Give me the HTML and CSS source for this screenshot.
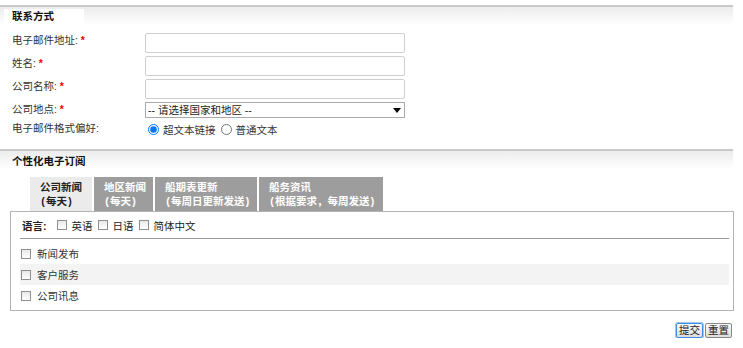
FILE: index.html
```html
<!DOCTYPE html>
<html lang="zh-cn">
<head>
    <meta charset="UTF-8">
    <title>联系方式</title>
    <link rel="stylesheet" href="styles.css">
</head>
<body>
    <!-- 联系方式 -->
    <div class="panel-head">
        <span class="panel-title boxed">联系方式</span>
    </div>
    <form class="contact-form">
        <label class="field-label">电子邮件地址: <em>*</em></label>
        <input type="text" class="text-input">

        <label class="field-label">姓名: <em>*</em></label>
        <input type="text" class="text-input">

        <label class="field-label">公司名称: <em>*</em></label>
        <input type="text" class="text-input">

        <label class="field-label">公司地点: <em>*</em></label>
        <div class="select-wrap">
            <select class="select-input">
                <option>-- 请选择国家和地区 --</option>
            </select>
        </div>

        <label class="field-label">电子邮件格式偏好:</label>
        <div class="radio-group">
            <label><input type="radio" name="fmt" checked> 超文本链接</label>
            <label><input type="radio" name="fmt"> 普通文本</label>
        </div>
    </form>

    <!-- 个性化电子订阅 -->
    <div class="panel-head second">
        <span class="panel-title">个性化电子订阅</span>
    </div>
    <div class="tabs">
        <div class="tab active">公司新闻<br><span class="pn">(</span>每天<span class="pn">)</span></div>
        <div class="tab">地区新闻<br><span class="pn">(</span>每天<span class="pn">)</span></div>
        <div class="tab">船期表更新<br><span class="pn">(</span>每周日更新发送<span class="pn">)</span></div>
        <div class="tab">船务资讯<br><span class="pn">(</span>根据要求，每周发送<span class="pn">)</span></div>
    </div>
    <div class="tab-body">
        <div class="lang-row">
            <b>语言:</b>
            <label><input type="checkbox" class="check"> 英语</label>
            <label><input type="checkbox" class="check"> 日语</label>
            <label><input type="checkbox" class="check"> 简体中文</label>
        </div>
        <div class="topic-row first"><label><input type="checkbox" class="check"> 新闻发布</label></div>
        <div class="topic-row alt"><label><input type="checkbox" class="check"> 客户服务</label></div>
        <div class="topic-row"><label><input type="checkbox" class="check"> 公司讯息</label></div>
    </div>

    <div class="actions">
        <button type="button" class="btn focus">提交</button>
        <button type="button" class="btn">重置</button>
    </div>
</body>
</html>
```

FILE: styles.css
```css
body {
    font-family: "Liberation Sans", "Noto Sans CJK SC", sans-serif;
    font-size: 10.5px;
    color: #222;
    margin: 0;
    width: 743px;
}
.panel-head {
    margin: 5px 10px 0 0;
    border-top: 2px solid #c9c9c9;
    background: linear-gradient(#ececec, #ffffff);
    height: 16px;
    padding: 2px 0 0 4px;
}
.panel-head.second {
    margin-top: 12px;
}
.panel-title {
    display: inline-block;
    font-weight: bold;
    height: 15px;
    line-height: 15px;
    padding: 0 8px;
    color: #111;
}
.panel-title.boxed {
    background-color: #fff;
    width: 64px;
}
.panel-head.second .panel-title {
    line-height: 17px;
}
.contact-form {
    display: grid;
    grid-template-columns: 133px 260px;
    row-gap: 3px;
    padding: 8px 0 0 12px;
    margin: 0;
}
label {
    display: flex;
    align-items: center;
}
.field-label {
    display: block;
    line-height: 14px;
    color: #333;
}
.field-label em {
    color: #e00;
    font-style: normal;
    font-weight: bold;
}
.text-input {
    height: 20px;
    box-sizing: border-box;
    border: 1px solid #cfcfcf;
    border-radius: 2px;
    margin: 0;
}
.select-wrap {
    position: relative;
    height: 16px;
}
.select-wrap::after {
    content: "";
    position: absolute;
    right: 4px;
    top: 6px;
    border-left: 4px solid transparent;
    border-right: 4px solid transparent;
    border-top: 5px solid #000;
    pointer-events: none;
}
.select-input {
    -webkit-appearance: none;
    appearance: none;
    width: 100%;
    height: 16px;
    box-sizing: border-box;
    border: 1px solid #aaa;
    font-family: inherit;
    font-size: 10.5px;
    line-height: 14px;
    padding: 0 2px;
    background: #fff;
    color: #222;
    margin: 0;
}
.radio-group {
    display: flex;
    align-items: center;
    gap: 2px;
    height: 16px;
    color: #333;
}
.radio-group input {
    width: 11px;
    height: 11px;
    margin: 0 4px 0 3px;
}
.tabs {
    display: flex;
    gap: 2px;
    margin: 8px 0 0 30px;
    height: 34px;
}
.tab {
    background-color: #9d9d9d;
    color: #fff;
    font-weight: bold;
    line-height: 14px;
    padding: 3px 0 0 10px;
    width: 50px;
}
.tab:nth-child(2) {
    width: 49px;
}
.tab:nth-child(3) {
    width: 92px;
}
.tab:nth-child(4) {
    width: 114px;
}
.tab.active {
    background-color: #ebebeb;
    color: #222;
    width: 52px;
}
.pn {
    display: inline-block;
    width: 6px;
    text-align: center;
}
.tab-body {
    margin-left: 10px;
    width: 709px;
    height: 98px;
    border: 1px solid #b3b3b3;
    padding: 0 4px 0 9px;
}
.lang-row {
    display: flex;
    align-items: center;
    gap: 5px;
    height: 26px;
    border-bottom: 1px solid #999;
    padding: 0 2px;
}
.lang-row b {
    color: #222;
    margin-right: 5px;
}
.check {
    appearance: none;
    -webkit-appearance: none;
    width: 10px;
    height: 10px;
    margin: 0 5px 0 0;
    border: 1px solid #8f8f8f;
    background: linear-gradient(#e9e9e9, #fff);
}
.topic-row {
    height: 21px;
    display: flex;
    align-items: center;
    padding-left: 1px;
    color: #333;
}
.topic-row.first {
    margin-top: 4px;
}
.topic-row .check {
    margin-right: 6px;
}
.topic-row.alt {
    background-color: #f3f3f3;
}
.actions {
    display: flex;
    justify-content: flex-end;
    gap: 2px;
    margin: 12px 11px 0 0;
}
.btn {
    font-family: inherit;
    font-size: 10.5px;
    padding: 0 2px;
    height: 15px;
    line-height: 13px;
    border: 1px solid #888;
    border-radius: 2px;
    background: linear-gradient(#fafafa, #dcdcdc);
    color: #222;
}
.btn.focus {
    border-color: #3c8ee0;
    box-shadow: 0 0 0 1px #9cc8f0;
}
```
